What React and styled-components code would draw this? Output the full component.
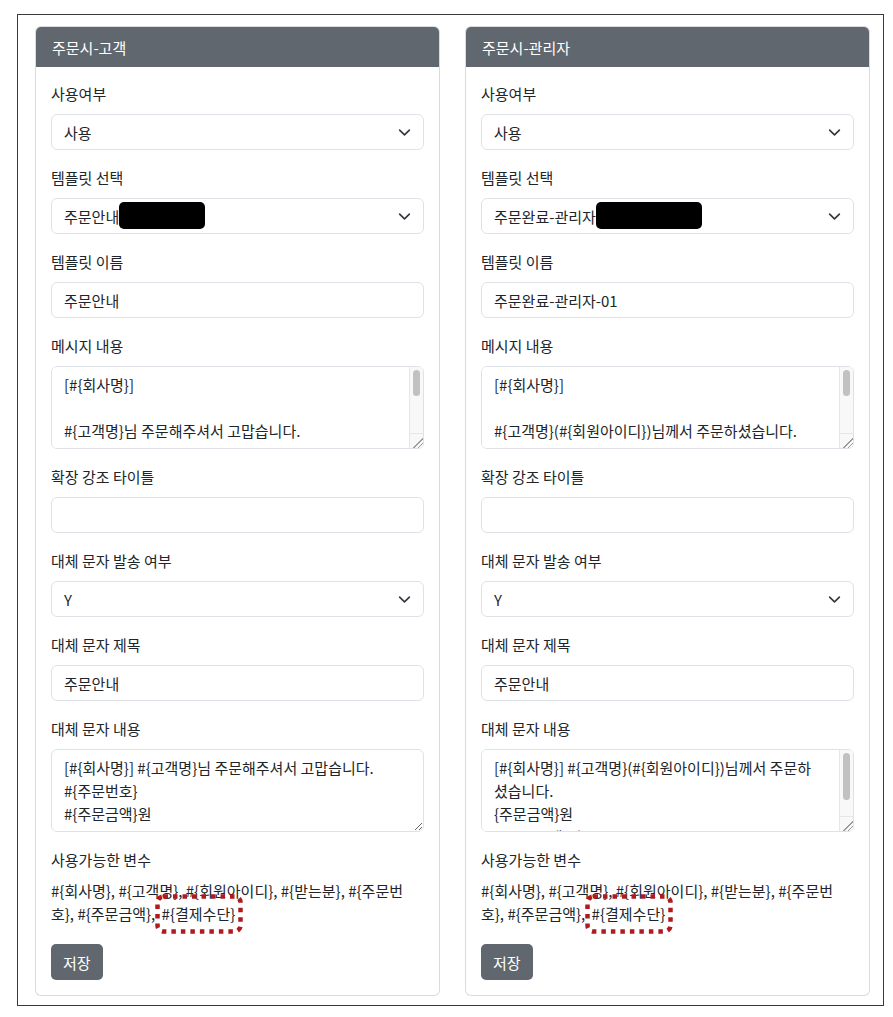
import React from "react";
import styled, { createGlobalStyle } from "styled-components";

const GlobalStyle = createGlobalStyle`
  body {
    margin: 0;
    background: #fff;
    font-family: "Noto Sans CJK KR", "Noto Sans", sans-serif;
    color: #212529;
  }
  * { box-sizing: border-box; }
`;

const Chevron = () => (
  <svg width="13" height="13" viewBox="0 0 16 16" fill="none">
    <path
      d="m2 5 6 6 6-6"
      stroke="#343a40"
      strokeWidth="2"
      strokeLinecap="round"
      strokeLinejoin="round"
    />
  </svg>
);

const customers = {
  title: "주문시-고객",
  template: "주문안내",
  redactWidth: 86,
  name: "주문안내",
  message:
    "[#{회사명}]\n\n#{고객명}님 주문해주셔서 고맙습니다.\n\n주문번호 : #{주문번호}\n주문금액 : #{주문금액}원\n결제수단 : #{결제수단}\n\n감사합니다.\n#{회사명}",
  messageThumb: 26,
  smsTitle: "주문안내",
  sms: "[#{회사명}] #{고객명}님 주문해주셔서 고맙습니다.\n#{주문번호}\n#{주문금액}원",
  smsThumb: 0,
};

const admin = {
  title: "주문시-관리자",
  template: "주문완료-관리자",
  redactWidth: 106,
  name: "주문완료-관리자-01",
  message:
    "[#{회사명}]\n\n#{고객명}(#{회원아이디})님께서 주문하셨습니다.\n\n주문번호 : #{주문번호}\n주문금액 : #{주문금액}원\n결제수단 : #{결제수단}\n받는분 : #{받는분}\n\n#{회사명}",
  messageThumb: 26,
  smsTitle: "주문안내",
  sms: "[#{회사명}] #{고객명}(#{회원아이디})님께서 주문하셨습니다.\n{주문금액}원\n#{주문금액}원",
  smsThumb: 47,
};

// textarea whose scrollbar is drawn by hand, so it shows in the headless shot
const ScrollText = ({ value, thumb }) => (
  <TextBox>
    <TextArea readOnly rows={3} value={value} $bar={thumb > 0} />
    {thumb > 0 && (
      <Track>
        <Thumb style={{ height: thumb }} />
        <Corner />
      </Track>
    )}
  </TextBox>
);

const VARS = "#{회사명}, #{고객명}, #{회원아이디}, #{받는분}, #{주문번호}, #{주문금액}, ";

const TemplateCard = ({ data }) => (
  <Card>
    <CardHeader>{data.title}</CardHeader>
    <CardBody>
      <Group>
        <Label>사용여부</Label>
        <Select>
          <span>사용</span>
          <Chevron />
        </Select>
      </Group>
      <Group>
        <Label>템플릿 선택</Label>
        <Select>
          <span>
            {data.template}
            <Redact $w={data.redactWidth} />
          </span>
          <Chevron />
        </Select>
      </Group>
      <Group>
        <Label>템플릿 이름</Label>
        <Input readOnly value={data.name} />
      </Group>
      <Group>
        <Label>메시지 내용</Label>
        <ScrollText value={data.message} thumb={data.messageThumb} />
      </Group>
      <Group>
        <Label>확장 강조 타이틀</Label>
        <Input readOnly value="" />
      </Group>
      <Group>
        <Label>대체 문자 발송 여부</Label>
        <Select>
          <span>Y</span>
          <Chevron />
        </Select>
      </Group>
      <Group>
        <Label>대체 문자 제목</Label>
        <Input readOnly value={data.smsTitle} />
      </Group>
      <Group>
        <Label>대체 문자 내용</Label>
        <ScrollText value={data.sms} thumb={data.smsThumb} />
      </Group>
      <Group>
        <Label>사용가능한 변수</Label>
        <Vars>
          {VARS}
          <Marked>
            {"#{결제수단}"}
            <Dotted viewBox="0 0 88 40" width="88" height="40">
              <rect
                x="2.5"
                y="2.5"
                width="83"
                height="35"
                rx="6"
                fill="none"
                stroke="#b01a1f"
                strokeWidth="4.5"
                strokeDasharray="4.5 5"
              />
            </Dotted>
          </Marked>
        </Vars>
      </Group>
      <SaveButton>저장</SaveButton>
    </CardBody>
  </Card>
);

const App = () => (
  <>
    <GlobalStyle />
    <Frame>
      <TemplateCard data={customers} />
      <TemplateCard data={admin} />
    </Frame>
  </>
);

const Frame = styled.div`
  margin: 14px 0 0 17px;
  width: 867px;
  border: 1px solid #3a3a3a;
  padding: 11px 13px 9px 17px;
  display: grid;
  grid-template-columns: 405px 405px;
  column-gap: 25px;
`;

const Card = styled.section`
  border: 1px solid rgba(0, 0, 0, 0.14);
  border-radius: 6px;
  overflow: hidden;
  background: #fff;
`;

const CardHeader = styled.div`
  height: 40px;
  display: flex;
  align-items: center;
  padding: 0 16px;
  background: #60676e;
  color: #fff;
  font-size: 15px;
`;

const CardBody = styled.div`
  padding: 15px;
`;

const Group = styled.div`
  margin-bottom: 16px;
`;

const Label = styled.label`
  display: block;
  font-size: 15px;
  line-height: 24px;
  margin-bottom: 8px;
`;

const fieldBase = `
  width: 100%;
  border: 1px solid #dee2e6;
  border-radius: 6px;
  font-family: "Noto Sans CJK KR", "Noto Sans", sans-serif;
  font-size: 15px;
  color: #212529;
  background: #fff;
`;

const Select = styled.div`
  ${fieldBase}
  height: 36px;
  display: flex;
  align-items: center;
  justify-content: space-between;
  padding: 0 12px;
  span {
    display: flex;
    align-items: center;
  }
`;

const Redact = styled.i`
  display: inline-block;
  width: ${(p) => p.$w}px;
  height: 27px;
  border-radius: 5px;
  background: #000;
  margin-top: -2px;
`;

const Input = styled.input`
  ${fieldBase}
  display: block;
  height: 36px;
  padding: 0 12px;
  outline: none;
`;

const TextBox = styled.div`
  position: relative;
`;

const TextArea = styled.textarea`
  ${fieldBase}
  display: block;
  height: 83px;
  padding: 6px ${(p) => (p.$bar ? 30 : 12)}px 6px 12px;
  line-height: 23px;
  resize: vertical;
  outline: none;
  scrollbar-width: none;
`;

const Track = styled.div`
  position: absolute;
  top: 1px;
  right: 1px;
  bottom: 1px;
  width: 14px;
  background: #f8f8f8;
  border-left: 1px solid #e6e6e6;
  border-radius: 0 5px 5px 0;
  display: flex;
  flex-direction: column;
  align-items: center;
  padding-top: 3px;
  pointer-events: none;
`;

const Thumb = styled.div`
  width: 7px;
  border-radius: 4px;
  background: #c1c1c1;
`;

const Corner = styled.div`
  margin-top: auto;
  width: 100%;
  height: 15px;
  border-top: 1px solid #e6e6e6;
  background: linear-gradient(
    135deg,
    transparent 62%,
    #9a9a9a 62%,
    #9a9a9a 67%,
    transparent 67%,
    transparent 78%,
    #9a9a9a 78%,
    #9a9a9a 83%,
    transparent 83%
  );
`;

const Vars = styled.p`
  margin: 0 0 19px;
  font-size: 15px;
  line-height: 22.5px;
`;

const Marked = styled.span`
  position: relative;
  white-space: nowrap;
  margin-left: 3px;
`;

const Dotted = styled.svg`
  position: absolute;
  left: -7px;
  top: -9px;
  pointer-events: none;
`;

const SaveButton = styled.button`
  height: 36px;
  padding: 0 12px;
  border: none;
  border-radius: 5px;
  background: #60676e;
  color: #fff;
  font-family: "Noto Sans CJK KR", "Noto Sans", sans-serif;
  font-size: 15px;
`;

export default App;
